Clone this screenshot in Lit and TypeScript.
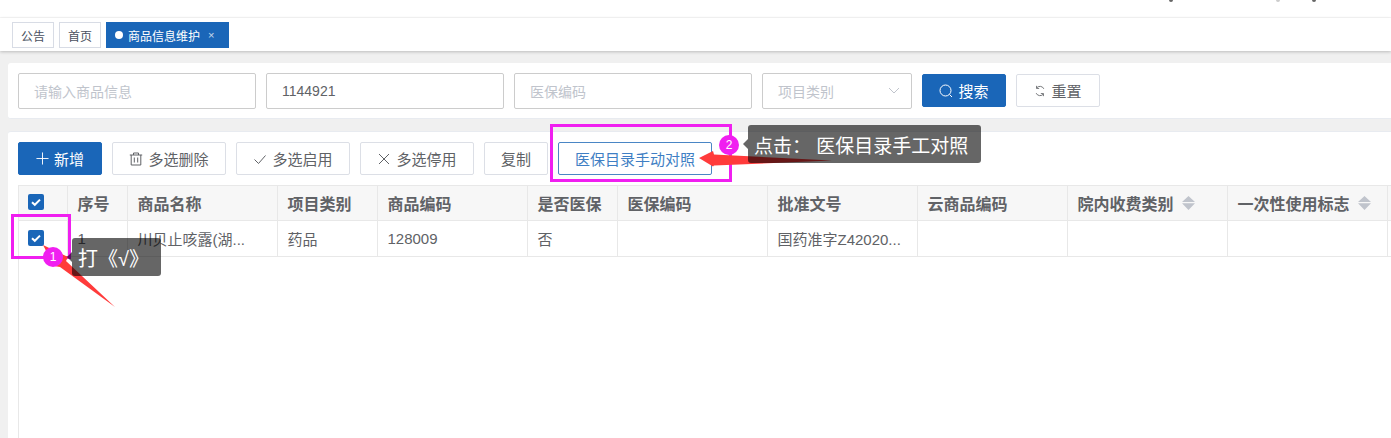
import { LitElement, html, css, svg } from "lit";
import { customElement } from "lit/decorators.js";

const COLS = [48, 60, 150, 100, 150, 90, 150, 150, 150, 160, 160, 160];
const HEAD: [string, boolean][] = [
  ["序号", false], ["商品名称", false], ["项目类别", false], ["商品编码", false], ["是否医保", false],
  ["医保编码", false], ["批准文号", false], ["云商品编码", false], ["院内收费类别", true], ["一次性使用标志", true], ["", false],
];
const ROW = ["1", "川贝止咳露(湖...", "药品", "128009", "否", "", "国药准字Z42020...", "", "", "", ""];

const check = html`<span class="cb"><svg viewBox="0 0 16 16" width="16" height="16"><path d="M4 8.2l2.8 2.6L12 5.6" fill="none" stroke="#fff" stroke-width="2"/></svg></span>`;
const sort = html`<svg class="sort" viewBox="0 0 13 14" width="13" height="14"><path d="M6.5 0l6.5 6H0zM6.5 14l6.5-6.8H0z" fill="#c0c4cc"/></svg>`;
const ic = (d: unknown, w = 14) => html`<svg class="ic" viewBox="0 0 14 14" width=${w} height=${w} fill="none" stroke="currentColor" stroke-width="1">${d}</svg>`;

@customElement("app-root")
export class AppRoot extends LitElement {
  static styles = css`
    :host { display: block; position: relative; width: 1391px; height: 438px; overflow: hidden; background: #f0f0f0;
      font-family: "Liberation Sans", "Noto Sans CJK SC", sans-serif; font-size: 14px; color: #606266; }
    .top { height: 18px; background: #fff; border-bottom: 1px solid #f8f8f8; box-sizing: border-box; }
    .tabs { height: 33px; box-sizing: border-box; background: #fff; display: flex; gap: 5px; padding: 4px 12px 0;
      box-shadow: 0 1px 3px rgba(0,0,0,.22); position: relative; }
    .tab { height: 26px; box-sizing: border-box; border: 1px solid #d8dce5; font-size: 12px; display: flex; align-items: center;
      padding: 0 8px; color: #495060; }
    .tab.on { background: #1a66b8; border-color: #1a66b8; color: #fff; gap: 5px; padding: 0 14px 0 8px; }
    .dot { width: 8px; height: 8px; border-radius: 50%; background: #fff; }
    .x { font-size: 11px; margin-left: 3px; opacity: .75; }
    .card { background: #fff; margin-left: 8px; border-radius: 3px; width: 1400px; }
    .search { margin-top: 12px; height: 56px; box-sizing: border-box; padding: 10px; display: flex; gap: 10px; align-items: center;
      border-bottom: 1px solid #e8ebf0; }
    .inp { width: 238px; height: 36px; box-sizing: border-box; border: 1px solid #ccc; border-radius: 2px; padding: 0 11px 0 15px;
      display: flex; align-items: center; justify-content: space-between; color: #c0c4cc; font-size: 14px; }
    .inp.val { color: #606266; }
    .inp.sel { width: 150px; }
    .btn { height: 33px; box-sizing: border-box; border: 1px solid #dcdfe6; border-radius: 2px; background: #fff; display: flex; align-items: center;
      justify-content: center; gap: 5px; font-size: 15px; color: #606266; font-family: inherit; padding: 0; }
    .btn.pri { background: #1a66b8; border-color: #1a66b8; color: #fff; }
    .w84 { width: 84px; }
    .w114 { width: 114px; }
    .w64 { width: 64px; }
    .link { width: 154px; border-color: #4a86c5; color: #3f7fc4; }
    .list { margin-top: 12px; height: 400px; padding: 10px 10px 0; box-sizing: border-box; border-top: 1px solid #e8ebf0; }
    .bar { display: flex; gap: 10px; height: 33px; }
    .tbl { border-collapse: collapse; table-layout: fixed; width: 1378px; }
    .wrap { border-left: 1px solid #e8e8e8; height: 260px; width: 1380px; margin-top: 10px; box-sizing: border-box; }
    th, td { box-sizing: border-box; padding: 0 10px; text-align: left; white-space: nowrap; overflow: hidden;
      border-right: 1px solid #e8e8e8; border-bottom: 1px solid #e8e8e8; }
    th { background: #f7f7f7; font-weight: 700; font-size: 16px; color: #606266; border-top: 1px solid #e8e8e8; height: 35px; }
    td { height: 36px; font-size: 15px; }
    th span.h { display: inline-flex; align-items: center; gap: 8px; }
    th.ck, td.ck { padding: 0 0 2px 9px; }
    .cb { display: block; width: 16px; height: 16px; border-radius: 2px; background: #1a66b8; }
    .cb svg { display: block; }
    .ic { flex: none; }
    .sort { flex: none; }
    .over { position: absolute; inset: 0; pointer-events: none; }
    .mark { position: absolute; box-sizing: border-box; border: 3px solid #f01ff0; }
    .m1 { left: 11px; top: 214px; width: 60px; height: 45px; }
    .m2 { left: 550px; top: 124px; width: 182px; height: 58px; }
    .badge { position: absolute; width: 20px; height: 20px; border-radius: 50%; background: #f01ff0; color: #fff; font-size: 12px;
      display: flex; align-items: center; justify-content: center; }
    .b1 { left: 43px; top: 247px; }
    .b2 { left: 719px; top: 135px; }
    .tip { position: absolute; height: 38px; box-sizing: border-box; background: rgba(0,0,0,.6); color: #fff; font-size: 19px; border-radius: 3px;
      display: flex; align-items: center; padding-left: 6px; white-space: pre; }
    .tip::before { content: ""; position: absolute; left: -5px; top: 14px; border: 5px solid transparent; border-left: 0; border-right-color: rgba(0,0,0,.6); }
    .t1 { left: 72px; top: 238px; width: 89px; font-size: 20px; }
    .t2 { left: 748px; top: 125px; width: 233px; }
    .arrows { position: absolute; left: 0; top: 0; }
    .crumb { position: absolute; top: 0; width: 4px; height: 2px; border-radius: 0 0 2px 2px; background: #666; }
    .c1 { left: 1169px; }
    .c2 { left: 1276px; background: #ccc; }
    .c3 { left: 1312px; }
  `;

  render() {
    return html`
      <div class="top"></div>
      <div class="tabs">
        <div class="tab">公告</div>
        <div class="tab">首页</div>
        <div class="tab on"><span class="dot"></span>商品信息维护<span class="x">×</span></div>
      </div>
      <div class="card search">
        <div class="inp">请输入商品信息</div>
        <div class="inp val">1144921</div>
        <div class="inp">医保编码</div>
        <div class="inp sel">项目类别
          <svg viewBox="0 0 12 8" width="12" height="8" fill="none" stroke="#c0c4cc"><path d="M1 1l5 5 5-5"/></svg>
        </div>
        <button class="btn pri w84">${ic(svg`<circle cx="6.5" cy="6.5" r="5.5"/><path d="M10.5 10.5l2.5 2.5"/>`)}搜索</button>
        <button class="btn w84">${ic(svg`<path d="M11.5 4.5A5 5 0 0 0 3 3.5M2.5 9.5A5 5 0 0 0 11 10.5"/><path d="M3 1v3h3M11 13v-3H8"/>`, 12)}重置</button>
      </div>
      <div class="card list">
        <div class="bar">
          <button class="btn pri w84">${ic(svg`<path d="M7 .5v13M.5 7h13"/>`, 13)}新增</button>
          <button class="btn w114">${ic(svg`<path d="M.8 3h12.4M4.5 3V1h5v2M2.2 3v10h9.6V3M5.3 5.5v5M8.7 5.5v5"/>`)}多选删除</button>
          <button class="btn w114">${ic(svg`<path d="M1.5 7.5l4 4 7-8"/>`)}多选启用</button>
          <button class="btn w114">${ic(svg`<path d="M2 2l10 10M12 2L2 12"/>`)}多选停用</button>
          <button class="btn w64">复制</button>
          <button class="btn link">医保目录手动对照</button>
        </div>
        <div class="wrap">
          <table class="tbl">
            <colgroup>${COLS.map((w) => html`<col style="width:${w}px" />`)}</colgroup>
            <tr>
              <th class="ck">${check}</th>
              ${HEAD.map(([t, s]) => html`<th><span class="h">${t}${s ? sort : ""}</span></th>`)}
            </tr>
            <tr>
              <td class="ck">${check}</td>
              ${ROW.map((t) => html`<td>${t}</td>`)}
            </tr>
          </table>
        </div>
      </div>
      <div class="over">
        <span class="crumb c1"></span><span class="crumb c2"></span><span class="crumb c3"></span>
        <div class="mark m1"></div>
        <div class="mark m2"></div>
        <svg class="arrows" width="1391" height="438">
          <polygon points="43,245 68,257 66,261 115,307 60,267 54,266" fill="#ff3b3b"/>
          <polygon points="699,158 713,151 714,154.5 832,160.5 714,165.5 713,166.5" fill="#ff3b3b"/>
        </svg>
        <div class="badge b1">1</div>
        <div class="badge b2">2</div>
        <div class="tip t1">打《√》</div>
        <div class="tip t2">点击： 医保目录手工对照</div>
      </div>
    `;
  }
}
